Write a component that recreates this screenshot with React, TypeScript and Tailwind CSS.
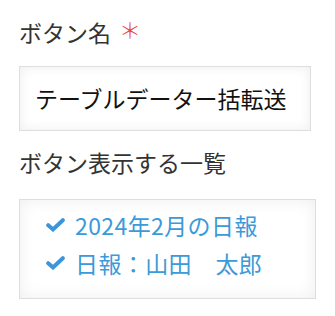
import React from 'react';

const font = { fontFamily: '"Noto Sans CJK JP", "Noto Sans", sans-serif' };

function Check() {
  return (
    <svg width="19" height="14" viewBox="0 0 19 14" className="shrink-0">
      <path d="M2.2 7.2 L7 11.4 L16.8 2.2" fill="none" stroke="#3a95dc" strokeWidth="4" strokeLinecap="round" strokeLinejoin="miter" />
    </svg>
  );
}

export default function App() {
  const items = ['2024年2月の日報', '日報：山田　太郎'];

  return (
    <div className="w-[335px] h-[316px] bg-white pl-[19px] pt-[16px]" style={font}>
      <div className="flex items-start text-[23px] leading-[33px] text-[#333]">
        <span>ボタン名</span>
        <span className="ml-[8px] mt-[-2px] text-[#e8463f] text-[22px] leading-[28px] font-light">＊</span>
      </div>

      <div className="mt-[17px] w-[292px] h-[65px] border border-[#dedede] bg-white shadow-[inset_0_0_12px_rgba(0,0,0,0.07)] flex items-center pl-[15px] text-[23px] text-[#111] overflow-hidden whitespace-nowrap">
        テーブルデーター括転送
      </div>

      <div className="mt-[15px] text-[23px] leading-[33px] text-[#333]">ボタン表示する一覧</div>

      <div className="mt-[20px] w-[297px] h-[100px] border border-[#dedede] bg-white shadow-[inset_0_0_16px_rgba(0,0,0,0.07)] pt-[6px] pl-[26px]">
        {items.map((t) => (
          <div key={t} className="flex items-center gap-[10px] h-[38px] text-[23px] tracking-[0.4px] text-[#3b9ad9]">
            <Check />
            <span>{t}</span>
          </div>
        ))}
      </div>
    </div>
  );
}
